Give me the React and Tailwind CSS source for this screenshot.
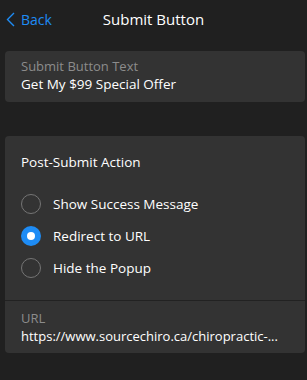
export default function App() {
  const options = ['Show Success Message', 'Redirect to URL', 'Hide the Popup'];
  const selected = 1;

  return (
    <div className="w-[307px] h-[380px] bg-[#202020] text-white overflow-hidden" style={{ fontFamily: '"Open Sans", "Noto Sans", sans-serif' }}>
      {/* Header */}
      <div className="relative flex items-center h-[38px]">
        <button className="flex items-center gap-[6px] pl-[6px] text-[#1e8cf5] text-[14px]">
          <svg width="9" height="15" viewBox="0 0 9 15" fill="none">
            <path d="M8 1L1.5 7.5L8 14" stroke="currentColor" strokeWidth="1.4" />
          </svg>
          <span>Back</span>
        </button>
        <div className="absolute inset-x-0 text-center text-[15px] pointer-events-none">Submit Button</div>
      </div>

      {/* Button text card */}
      <div className="mt-[13px] ml-[5px] mr-[2px] h-[51px] rounded-[4px] bg-[#333333] px-[16px] pt-[6px]">
        <div className="text-[13px] leading-[18px] text-[#8c8c8c]">Submit Button Text</div>
        <div className="text-[13.5px] leading-[19px]">Get My $99 Special Offer</div>
      </div>

      {/* Post-submit card */}
      <div className="mt-[34px] ml-[5px] mr-[2px] rounded-[4px] bg-[#333333]">
        <div className="px-[16px] pt-[16px]">
          <div className="text-[13.5px] leading-[20px]">Post-Submit Action</div>
          <div className="mt-[22px] flex flex-col gap-[12px] pb-[22px]">
            {options.map((opt, i) => (
              <div key={opt} className="flex items-center h-[20px]">
                {i === selected ? (
                  <span className="w-[20px] h-[20px] rounded-full bg-[#1e8cf5] flex items-center justify-center">
                    <span className="w-[8px] h-[8px] rounded-full bg-white" />
                  </span>
                ) : (
                  <span className="w-[20px] h-[20px] rounded-full border-[1.5px] border-[#757575]" />
                )}
                <span className="ml-[12px] text-[13.5px]">{opt}</span>
              </div>
            ))}
          </div>
        </div>
        <div className="border-t border-[#222222] px-[16px] pt-[8px] pb-[7px]">
          <div className="text-[13px] leading-[18px] text-[#8c8c8c]">URL</div>
          <div className="text-[13px] leading-[19px] truncate">https://www.sourcechiro.ca/chiropractic-...</div>
        </div>
      </div>
    </div>
  );
}
